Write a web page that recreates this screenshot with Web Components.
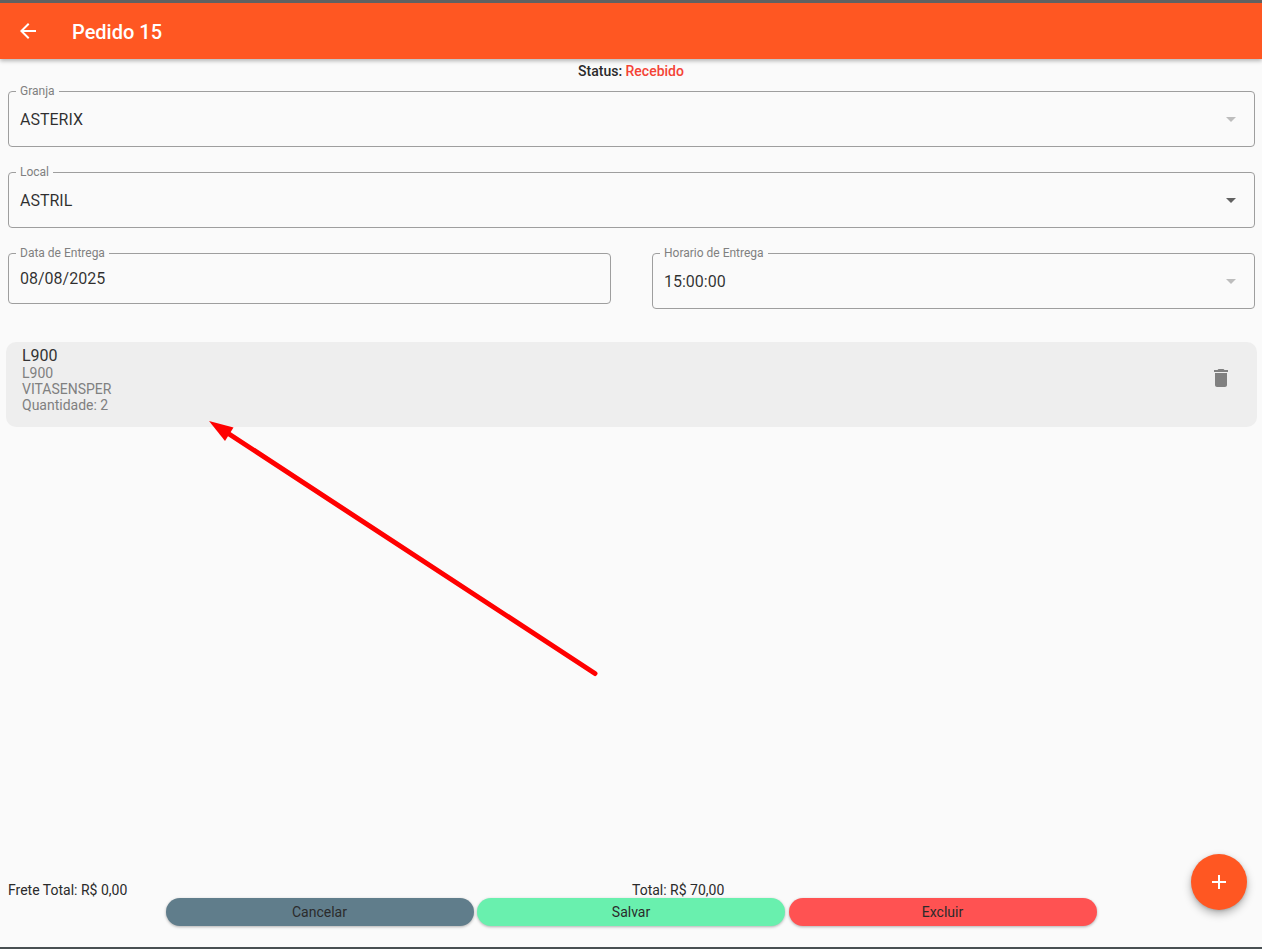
<!DOCTYPE html>
<html lang="pt-BR">
<head>
<meta charset="utf-8">
<title>Pedido 15</title>
<style>
  html, body { margin: 0; padding: 0; height: 100%; }
  body {
    background: #fafafa;
    font-family: Roboto, "Liberation Sans", sans-serif;
    color: #2b2b2b;
    overflow: hidden;
  }
</style>
</head>
<body>
<pedido-page>
  <app-bar slot="bar">Pedido 15</app-bar>
  <order-status label="Status:" value="Recebido"></order-status>

  <outlined-field label="Granja" arrow="dim" style="margin-top:12px">ASTERIX</outlined-field>
  <outlined-field label="Local" arrow="dark" style="margin-top:25px">ASTRIL</outlined-field>
  <field-row style="margin-top:25px">
    <outlined-field label="Data de Entrega" short>08/08/2025</outlined-field>
    <outlined-field label="Horario de Entrega" arrow="dim" offset>15:00:00</outlined-field>
  </field-row>

  <item-card title="L900" style="margin-top:33px">
    <div>L900</div>
    <div>VITASENSPER</div>
    <div>Quantidade: 2</div>
  </item-card>

  <order-footer slot="footer" frete="Frete Total: R$ 0,00" total="Total: R$ 70,00">
    <pill-button color="#607d8b">Cancelar</pill-button>
    <pill-button color="#69f0ae">Salvar</pill-button>
    <pill-button color="#ff5252">Excluir</pill-button>
  </order-footer>
  <add-fab slot="overlay"></add-fab>
  <note-arrow slot="overlay"></note-arrow>
</pedido-page>

<script>
const ICONS = {
  back: 'M20 11H7.83l5.59-5.59L12 4l-8 8 8 8 1.41-1.41L7.83 13H20v-2z',
  drop: 'M7 10l5 5 5-5z',
  trash: 'M6 19c0 1.1.9 2 2 2h8c1.1 0 2-.9 2-2V7H6v12zM19 4h-3.5l-1-1h-5l-1 1H5v2h14V4z',
  add: 'M19 13h-6v6h-2v-6H5v-2h6V5h2v6h6v2z'
};

const icon = (name, color) =>
  `<svg width="24" height="24" viewBox="0 0 24 24" fill="${color}"><path d="${ICONS[name]}"></path></svg>`;

class PedidoPage extends HTMLElement {
  constructor() {
    super();
    this.attachShadow({ mode: 'open' }).innerHTML = `
      <style>
        :host {
          display: flex;
          flex-direction: column;
          position: relative;
          height: 949px;
          box-sizing: border-box;
          border-bottom: 2px solid #484f52;
          overflow: hidden;
        }
        .body { display: flex; flex-direction: column; flex: 1; }
      </style>
      <slot name="bar"></slot>
      <div class="body"><slot></slot></div>
      <slot name="footer"></slot>
      <slot name="overlay"></slot>
    `;
  }
}

class AppBar extends HTMLElement {
  constructor() {
    super();
    this.attachShadow({ mode: 'open' }).innerHTML = `
      <style>
        :host {
          display: flex;
          align-items: center;
          height: 56px;
          flex: none;
          border-top: 3px solid #616161;
          background: #ff5722;
          color: #fff;
          font-size: 20px;
          font-weight: 500;
          box-shadow: 0 2px 4px rgba(0, 0, 0, .28);
          position: relative;
          z-index: 1;
        }
        svg { margin-left: 16px; margin-right: 32px; display: block; }
        .title { padding-top: 2px; }
      </style>
      ${icon('back', '#fff')}
      <div class="title"><slot></slot></div>
    `;
  }
}

class OrderStatus extends HTMLElement {
  constructor() {
    super();
    this.attachShadow({ mode: 'open' }).innerHTML = `
      <style>
        :host {
          display: block;
          margin-top: 4px;
          text-align: center;
          font-size: 14px;
          line-height: 16px;
          font-weight: 500;
          color: #2b2b2b;
        }
        span { color: #f44336; }
      </style>
      ${this.getAttribute('label')} <span>${this.getAttribute('value')}</span>
    `;
  }
}

class OutlinedField extends HTMLElement {
  constructor() {
    super();
    const arrow = this.getAttribute('arrow');
    const color = arrow === 'dark' ? '#616161' : '#bdbdbd';
    this.attachShadow({ mode: 'open' }).innerHTML = `
      <style>
        :host {
          display: flex;
          align-items: center;
          position: relative;
          box-sizing: border-box;
          height: 56px;
          margin-left: 8px;
          margin-right: 7px;
          padding: 0 6px 0 11px;
          border: 1px solid #9e9e9e;
          border-radius: 4px;
          font-size: 16px;
          color: rgba(0, 0, 0, .82);
        }
        :host([short]) { height: 51px; }
        :host([offset]) .value { padding-top: 1px; }
        label {
          position: absolute;
          left: 7px;
          top: -9px;
          padding: 0 4px;
          background: #fafafa;
          font-size: 12px;
          line-height: 16px;
          color: #808080;
        }
        .value { flex: 1; }
        svg { display: block; flex: none; margin-right: 5px; }
      </style>
      <label>${this.getAttribute('label')}</label>
      <div class="value"><slot></slot></div>
      ${arrow ? icon('drop', color) : ''}
    `;
  }
}

class FieldRow extends HTMLElement {
  constructor() {
    super();
    this.attachShadow({ mode: 'open' }).innerHTML = `
      <style>
        :host {
          display: grid;
          grid-template-columns: 603px 603px;
          justify-content: space-between;
          align-items: start;
          margin: 0 7px 0 8px;
        }
        ::slotted(outlined-field) { margin: 0; }
      </style>
      <slot></slot>
    `;
  }
}

class ItemCard extends HTMLElement {
  constructor() {
    super();
    this.attachShadow({ mode: 'open' }).innerHTML = `
      <style>
        :host {
          display: flex;
          box-sizing: border-box;
          height: 85px;
          margin: 0 5px 0 6px;
          padding: 4px 24px 0 16px;
          background: #eeeeee;
          border-radius: 10px;
        }
        .text { flex: 1; }
        .title { font-size: 16px; line-height: 19px; color: #333333; }
        .sub { font-size: 14px; line-height: 16px; color: #808080; }
        svg { display: block; margin-top: 20px; }
      </style>
      <div class="text">
        <div class="title">${this.getAttribute('title')}</div>
        <div class="sub"><slot></slot></div>
      </div>
      ${icon('trash', '#808080')}
    `;
  }
}

class OrderFooter extends HTMLElement {
  constructor() {
    super();
    this.attachShadow({ mode: 'open' }).innerHTML = `
      <style>
        :host {
          display: block;
          flex: none;
          padding-bottom: 21px;
          font-size: 14px;
          line-height: 16px;
          color: #2b2b2b;
        }
        .totals { display: grid; grid-template-columns: 1fr 1fr; }
        .frete { padding-left: 8px; }
        .total { padding-left: 1px; }
        .actions { display: flex; justify-content: center; gap: 3.5px; }
      </style>
      <div class="totals">
        <div class="frete">${this.getAttribute('frete')}</div>
        <div class="total">${this.getAttribute('total')}</div>
      </div>
      <div class="actions"><slot></slot></div>
    `;
  }
}

class PillButton extends HTMLElement {
  constructor() {
    super();
    this.attachShadow({ mode: 'open' }).innerHTML = `
      <style>
        :host {
          display: flex;
          align-items: center;
          justify-content: center;
          width: 308px;
          height: 28px;
          border-radius: 14px;
          background: ${this.getAttribute('color')};
          color: #2b2b2b;
          font-size: 14px;
          box-shadow: 0 1px 3px rgba(0, 0, 0, .3);
        }
      </style>
      <slot></slot>
    `;
  }
}

class AddFab extends HTMLElement {
  constructor() {
    super();
    this.attachShadow({ mode: 'open' }).innerHTML = `
      <style>
        :host {
          position: absolute;
          left: 1191px;
          top: 854px;
          width: 56px;
          height: 56px;
          display: flex;
          align-items: center;
          justify-content: center;
          border-radius: 50%;
          background: #ff5722;
          box-shadow: 0 4px 8px rgba(0, 0, 0, .28), 0 1px 3px rgba(0, 0, 0, .15);
        }
        svg { display: block; }
      </style>
      ${icon('add', '#fff')}
    `;
  }
}

class NoteArrow extends HTMLElement {
  constructor() {
    super();
    this.attachShadow({ mode: 'open' }).innerHTML = `
      <style>
        :host { position: absolute; left: 0; top: 0; width: 1262px; height: 949px; pointer-events: none; }
        svg { display: block; }
      </style>
      <svg width="1262" height="949" viewBox="0 0 1262 949">
        <line x1="595" y1="673.5" x2="226" y2="432" stroke="#ff0000" stroke-width="5" stroke-linecap="round"></line>
        <polygon points="209,421 233.5,427.5 225,441" fill="#ff0000"></polygon>
      </svg>
    `;
  }
}

customElements.define('pedido-page', PedidoPage);
customElements.define('app-bar', AppBar);
customElements.define('order-status', OrderStatus);
customElements.define('outlined-field', OutlinedField);
customElements.define('field-row', FieldRow);
customElements.define('item-card', ItemCard);
customElements.define('order-footer', OrderFooter);
customElements.define('pill-button', PillButton);
customElements.define('add-fab', AddFab);
customElements.define('note-arrow', NoteArrow);
</script>
</body>
</html>
